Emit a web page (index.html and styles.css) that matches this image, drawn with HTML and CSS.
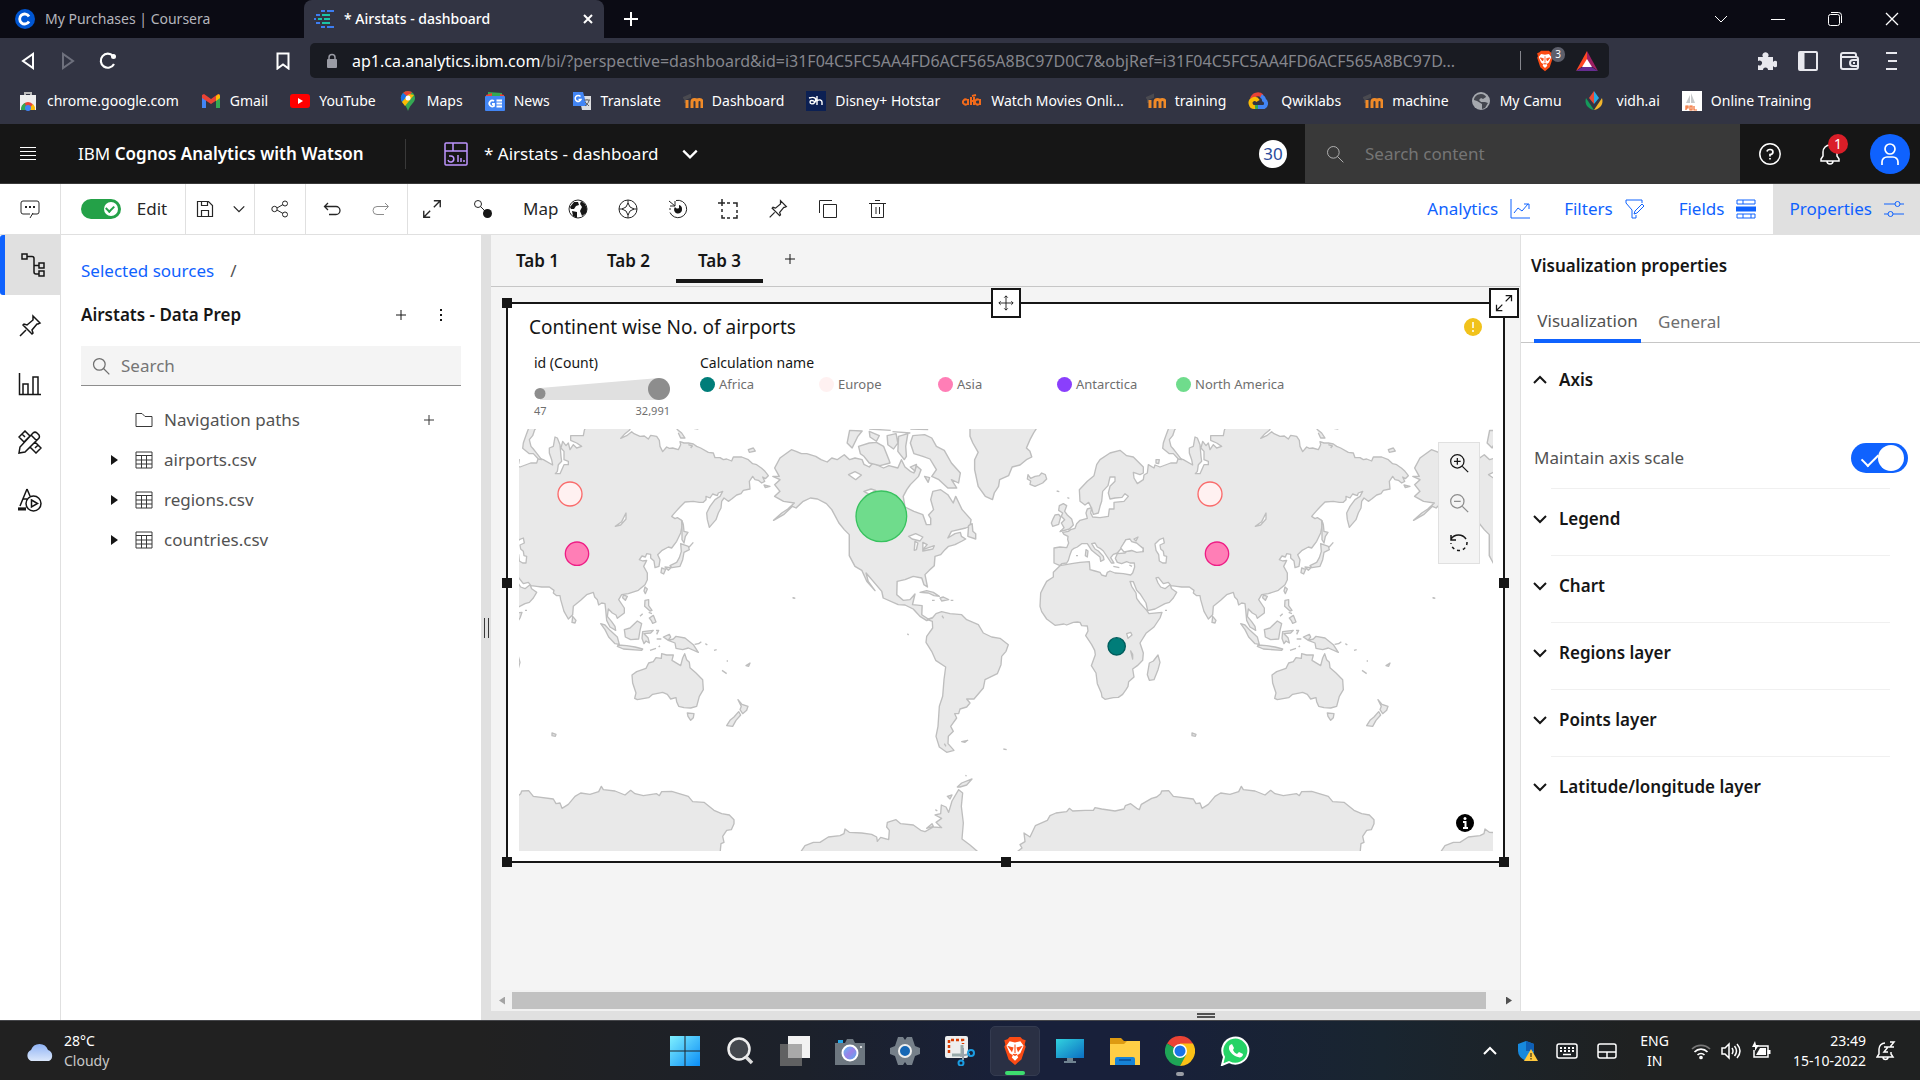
FILE: index.html
```html
<!DOCTYPE html>
<html lang="en">
<head>
<meta charset="utf-8">
<title>* Airstats - dashboard</title>
<link rel="stylesheet" href="styles.css">
</head>
<body>
<svg class="defs" aria-hidden="true">
  <symbol id="plus" viewBox="0 0 16 16"><path d="M8 3v10M3 8h10"/></symbol>
  <symbol id="search" viewBox="0 0 24 24"><circle cx="10" cy="10" r="7"/><path d="M15 15l7 7"/></symbol>
  <symbol id="down" viewBox="0 0 16 16"><path d="M2 5l6 6 6-6"/></symbol>
  <symbol id="up" viewBox="0 0 16 16"><path d="M2 11l6-6 6 6"/></symbol>
  <symbol id="expand" viewBox="0 0 24 24"><path d="M14 3h7v7M21 3l-7 7M10 21H3v-7M3 21l7-7"/></symbol>
  <symbol id="pin" viewBox="0 0 24 24"><path d="M15 2l7 7-2 1-1 0-5 6 1 3-1 1-9-9 1-1 3 1 6-5 0-2zM8 16l-6 6"/></symbol>
  <symbol id="table" viewBox="0 0 18 18"><path d="M1 1h16v16H1zM1 4.500h16M1 9h16M1 13h16M6.500 4.500V17M11.500 4.500V17"/></symbol>
  <symbol id="moodle" viewBox="0 0 20 20"><path d="M0 7l7-3v2L2 8v4" fill="none" stroke="#4a4a50" stroke-width="2"/><path d="M4 9v8M9 17V11a2.500 2.500 0 0 1 5 0v6M14 11a2.500 2.500 0 0 1 5 0v6" fill="none" stroke="#f08a28" stroke-width="3"/></symbol>
  <symbol id="lion" viewBox="0 0 24 28"><path d="M7 1h10l2 2 3 1-1 4 1 2-4 12-6 5-6-5L2 10l1-2-1-4 3-1z" fill="#fb4b14"/><path d="M7 5l5 1 5-1 3 4-3 7-3 2 1 2-3 3-3-3 1-2-3-2-3-7z" fill="#fff"/><path d="M6 10l4 1-1 3zM18 10l-4 1 1 3zM12 8v8M10 17l2 1 2-1" fill="#fb4b14" stroke="#fb4b14"/></symbol>
</svg>

<div class="screen">
  <header class="browser">
    <div class="tabstrip">
      <div class="btab"><svg class="i20" viewBox="0 0 20 20"><circle cx="10" cy="10" r="10" fill="#0056d2"/><path d="M14 7.500a5 5 0 1 0 0 5" fill="none" stroke="#fff" stroke-width="2.800"/></svg><span>My Purchases | Coursera</span></div>
      <div class="btab active"><svg class="i20" viewBox="0 0 20 20" fill="none" stroke-width="2"><path d="M7 2h4M13 2h7M2 6h4M0 10h2M2 14h4M7 18h4M13 18h7" stroke="#3d7df2"/><path d="M8 6h8M4 10h4M10 10h6M8 14h8" stroke="#1ac2a8"/></svg><span>* Airstats - dashboard</span><button class="plain close" aria-label="Close tab"><svg class="i12" viewBox="0 0 12 12"><path d="M2 2l8 8M10 2l-8 8" stroke-width="2"/></svg></button></div>
      <button class="plain newtab" aria-label="New tab"><svg class="i16" viewBox="0 0 16 16"><path d="M8 1v14M1 8h14" stroke-width="2"/></svg></button>
      <div class="wincontrols">
        <button class="plain" aria-label="Search tabs"><svg class="i14" viewBox="0 0 14 14"><path d="M1 4l6 6 6-6"/></svg></button>
        <button class="plain" aria-label="Minimize"><svg class="i14" viewBox="0 0 14 14"><path d="M0 7.500h14"/></svg></button>
        <button class="plain" aria-label="Restore"><svg class="i14" viewBox="0 0 14 14"><rect x=".5" y="2.500" width="11" height="11" rx="2"/><path d="M3 .5h7.500a3 3 0 0 1 3 3V11"/></svg></button>
        <button class="plain" aria-label="Close"><svg class="i14" viewBox="0 0 14 14"><path d="M1 1l12 12M13 1L1 13" stroke-width="1.300"/></svg></button>
      </div>
    </div>
    <div class="navbar">
      <button class="plain back" aria-label="Back"><svg class="i18" viewBox="0 0 18 18"><path d="M14 2v14L4 9z" stroke-width="2"/></svg></button>
      <button class="plain forward" aria-label="Forward"><svg class="i18" viewBox="0 0 18 18"><path d="M4 2v14l10-7z" stroke-width="2"/></svg></button>
      <button class="plain reload" aria-label="Reload"><svg class="i18" viewBox="0 0 18 18"><path d="M15 12a7 7 0 1 1-1-8" stroke-width="2.200"/><circle cx="14.500" cy="4.500" r="2.500" fill="#fff" stroke="none"/></svg></button>
      <button class="plain mark" aria-label="Bookmark"><svg class="i18" viewBox="0 0 18 18"><path d="M3.500 1.500h11v15l-5.500-4-5.500 4z" stroke-width="2"/></svg></button>
      <div class="url">
        <svg class="i16" viewBox="0 0 16 16"><path d="M5 7V4.500a3 3 0 0 1 6 0V7" stroke="#9a9ca5" stroke-width="1.500"/><rect x="3" y="6" width="10" height="9" rx="1" fill="#9a9ca5"/></svg>
        <span class="address"><b>ap1.ca.analytics.ibm.com</b>/bi/?perspective=dashboard&amp;id=i31F04C5FC5AA4FD6ACF565A8BC97D0C7&amp;objRef=i31F04C5FC5AA4FD6ACF565A8BC97D...</span>
        <span class="rule"></span>
        <button class="plain shield" aria-label="Shields"><svg class="lionicon"><use href="#lion"/></svg><span class="count">3</span></button>
        <svg class="i22" viewBox="0 0 22 22"><path d="M11 1L0 21l11-8z" fill="#ff4724"/><path d="M11 1l11 20-11-8z" fill="#9e1f63"/><path d="M0 21h22l-11-7z" fill="#662d91"/><path d="M11 9l5 8H6z" fill="#fff"/></svg>
      </div>
      <div class="exts">
        <svg class="i20" viewBox="0 0 20 20"><path d="M1 6h5a3 3 0 1 1 5 0h5v5a3 3 0 1 1 0 4v4h-5a2.500 2.500 0 1 0-5 0H1v-5a2.500 2.500 0 1 0 0-4z" fill="#e8e8ee"/></svg>
        <svg class="i20" viewBox="0 0 20 20"><rect x="1" y="1" width="18" height="18" rx="1" stroke-width="2"/><path d="M4 1v18" stroke-width="5"/></svg>
        <svg class="i20" viewBox="0 0 20 20" stroke-width="2"><path d="M16 7V4a2 2 0 0 0-2-2H3a2 2 0 0 0-2 2v12a2 2 0 0 0 2 2h13a2 2 0 0 0 2-2V8a2 2 0 0 0-2-2H1"/><path d="M19 9h-6a3 3 0 0 0 0 6h6M13 12h2"/></svg>
        <svg class="i20" viewBox="0 0 20 20"><path d="M5 2h11M7 10h9M5 18h11" stroke-width="2"/></svg>
      </div>
    </div>
    <nav class="bookmarks" aria-label="Bookmarks">
      <a href="#"><svg class="i20" viewBox="0 0 20 20"><path d="M2 4h16v15H2z" fill="#eee"/><path d="M7 4V2h6v2" fill="none" stroke="#bbb" stroke-width="2"/><path d="M4 17a6 6 0 0 1 12 0H4z" fill="#ea4335"/><path d="M3 19a7 7 0 0 1 4-7l2 7z" fill="#34a853"/><path d="M17 19a7 7 0 0 0-2-6l-5 6z" fill="#fbbc05"/><circle cx="10" cy="17" r="3" fill="#4285f4"/></svg>chrome.google.com</a>
      <a href="#"><svg class="i20" viewBox="0 0 20 20"><path d="M1 5v12h4V8z" fill="#4285f4"/><path d="M19 5v12h-4V8z" fill="#34a853"/><path d="M1 4l2-1 7 5 7-5 2 1v3l-9 6-9-6z" fill="#ea4335"/><path d="M15 5l3-2 1 2v2l-4 3z" fill="#fbbc05"/></svg>Gmail</a>
      <a href="#"><svg class="i20" viewBox="0 0 20 20"><rect y="3" width="20" height="14" rx="3" fill="#f00"/><path d="M8 7l5 3-5 3z" fill="#fff"/></svg>YouTube</a>
      <a href="#"><svg class="i20" viewBox="0 0 20 20"><path d="M10 0a7 7 0 0 0-7 7c0 5 5 6 7 13 2-7 7-8 7-13a7 7 0 0 0-7-7z" fill="#34a853"/><path d="M10 0a7 7 0 0 0-5 2l5 5 4-6z" fill="#ea4335"/><path d="M5 2a7 7 0 0 0-1 9l6-5z" fill="#1a73e8"/><path d="M4 11l7-8 5 1-9 11z" fill="#fbbc04"/><circle cx="10" cy="7" r="2.500" fill="#fff"/></svg>Maps</a>
      <a href="#"><svg class="i20" viewBox="0 0 20 20"><path d="M3 1l14 1v5H3z" fill="#34a853"/><path d="M1 4l6-2v5H1zM15 3l4 1v3h-4z" fill="#ea4335"/><rect y="5" width="20" height="15" rx="1" fill="#4285f4"/><path d="M9 10a3 3 0 1 0 0 5v-2H7M11.500 9.500H17M11.500 12.500H17M11.500 15.500H17" fill="none" stroke="#fff" stroke-width="1.800"/></svg>News</a>
      <a href="#"><svg class="i20" viewBox="0 0 20 20"><path d="M7 5h12v14H10z" fill="#dcdde0"/><path d="M1 1h10l4 14H1z" fill="#4285f4"/><path d="M8.500 5.500a3 3 0 1 0 .5 3H6.500" fill="none" stroke="#fff" stroke-width="1.500"/><path d="M12 9h6M15 8v1M17 9c0 3-3 5-4 6M13 11l4 4" fill="none" stroke="#666"/></svg>Translate</a>
      <a href="#"><svg class="i20"><use href="#moodle"/></svg>Dashboard</a>
      <a href="#"><svg class="i20" viewBox="0 0 20 20"><rect width="20" height="20" fill="#0c2053"/><path d="M3 7c6-2 8 1 6 4-2 3-5 2-5 0s3-2 5 0M11 5v9M11 10c2-2 5-1 5 1v3" fill="none" stroke="#fff" stroke-width="1.400"/></svg>Disney+ Hotstar</a>
      <a href="#"><svg class="i20" viewBox="0 0 20 20"><path d="M5 9a2.500 2.500 0 1 0 0 4M6 8v6M9 6v8M9 10h3M12 6v8M17 9a2.500 2.500 0 1 0 0 4M18 8v6M10 5l4-1" fill="none" stroke="#f26a1b" stroke-width="2"/></svg>Watch Movies Onli...</a>
      <a href="#"><svg class="i20"><use href="#moodle"/></svg>training</a>
      <a href="#" class="wide"><svg class="i20" viewBox="0 0 20 20" fill="none" stroke-width="4"><path d="M4 8a6 6 0 0 1 10-3" stroke="#ea4335"/><path d="M13 5c2 1 3 3 3 4a4 4 0 0 1 0 7h-6" stroke="#4285f4"/><path d="M10 16H6" stroke="#34a853"/><path d="M7 16a4 4 0 1 1 3-6" stroke="#fbbc05"/></svg>Qwiklabs</a>
      <a href="#"><svg class="i20"><use href="#moodle"/></svg>machine</a>
      <a href="#"><svg class="i20" viewBox="0 0 20 20"><circle cx="10" cy="10" r="9" fill="#a5a8ae"/><path d="M10 3c3 0 5 2 5 3l-3 2-2-1-2 2 2 2h4l3 1-3 5-3 1 0-5-5-3-3-1c0-3 3-6 7-6z" fill="#44464f"/></svg>My Camu</a>
      <a href="#" class="wide"><svg class="i20" viewBox="0 0 20 20"><path d="M10 0l5 7-5 6z" fill="#29a9e1"/><path d="M10 0L5 7l5 6z" fill="#e94a35"/><path d="M2 7l8 12C4 18 0 13 2 7z" fill="#159a5b"/><path d="M18 7l-8 12c6-1 10-6 8-12z" fill="#f2b52c"/></svg>vidh.ai</a>
      <a href="#"><svg class="i20" viewBox="0 0 20 20"><rect width="20" height="20" fill="#fff"/><path d="M4 12l4-8v8zM9 12V2l4 10z" fill="#c6c8ca"/><path d="M4 19v-4h2v2H4M8 19v-4h2v4zM12 15v4h3" fill="none" stroke="#f16a2b" stroke-width="1.200"/></svg>Online Training</a>
    </nav>
  </header>

  <header class="appbar">
    <button class="plain menu" aria-label="Menu"><svg class="i16" viewBox="0 0 16 16"><path d="M0 1.500h16M0 5.500h16M0 9.500h16M0 13.500h16" stroke-width="1.200"/></svg></button>
    <div class="brand">IBM <b>Cognos Analytics with Watson</b></div>
    <button class="plain switcher"><svg class="i24 purple" viewBox="0 0 24 24" stroke-width="1.500"><rect x="1" y="1" width="22" height="22" rx="1"/><path d="M1 9h22M9 1v8M5 14h2a3 3 0 1 1-3 4M14 13v7M17 16v4M20 18v2"/></svg><span>* Airstats - dashboard</span><svg class="i18 chev"><use href="#down"/></svg></button>
    <span class="trial">30</span>
    <label class="sitesearch"><svg class="i20"><use href="#search"/></svg><input type="text" placeholder="Search content" aria-label="Search content"></label>
    <div class="account">
      <button class="plain" aria-label="Help"><svg class="i22" viewBox="0 0 22 22"><circle cx="11" cy="11" r="10.200" stroke-width="1.500"/><path d="M8 8.500a3 2.500 0 1 1 3 3v2M11 15v1.500" stroke-width="1.700"/></svg></button>
      <button class="plain bell" aria-label="Notifications"><svg class="i24" viewBox="0 0 24 24"><path d="M3 19h18v-2l-2-3v-4a7 7 0 0 0-14 0v4l-2 3zM9 19a3 3 0 0 0 6 0M12 3V1" stroke-width="1.500"/></svg><span>1</span></button>
      <button class="plain avatar" aria-label="Account"><svg class="i24" viewBox="0 0 24 24"><circle cx="12" cy="7" r="5" stroke-width="1.700"/><path d="M4 23v-3a5 5 0 0 1 5-5h6a5 5 0 0 1 5 5v3" stroke-width="1.700"/></svg></button>
    </div>
  </header>

  <div class="toolbar">
    <div class="grp rail-w"><button class="plain" aria-label="Comments"><svg class="i20" viewBox="0 0 20 20"><path d="M12 15h5a2 2 0 0 0 2-2V4a2 2 0 0 0-2-2H3a2 2 0 0 0-2 2v9a2 2 0 0 0 2 2h7M13 14l-3 5"/><path d="M5 8h2M9 8h2M13 8h2" stroke-width="2"/></svg></button></div>
    <div class="grp edit"><input type="checkbox" id="edit" class="switch green" checked><label for="edit">Edit</label></div>
    <div class="grp save"><button class="plain" aria-label="Save"><svg class="i18" viewBox="0 0 18 18"><path d="M1.500 1.500h11l4 4v11h-15zM5.500 1.500v4h6v-4M5.500 16.500v-6h7v6" stroke-width="1.200"/></svg></button><button class="plain" aria-label="Save options"><svg class="i14 strong"><use href="#down"/></svg></button></div>
    <div class="grp share"><button class="plain" aria-label="Share"><svg class="i18" viewBox="0 0 18 18"><circle cx="3.500" cy="9" r="2.700"/><circle cx="14" cy="3.500" r="2.500"/><circle cx="14" cy="14.500" r="2.500"/><path d="M6 8l6-3.500M6 10l6 3.500"/></svg></button></div>
    <div class="grp undo"><button class="plain" aria-label="Undo"><svg class="i18" viewBox="0 0 18 18"><path d="M5 3L1.500 6.500 5 10M2 6.500h11a4 4 0 0 1 0 8H6" stroke-width="1.300"/></svg></button><button class="plain off" aria-label="Redo"><svg class="i18" viewBox="0 0 18 18"><path d="M13 3l3.500 3.500L13 10M16 6.500H5a4 4 0 0 0 0 8h7"/></svg></button></div>
    <div class="tools">
      <button class="plain" aria-label="Expand"><svg class="i22 strong"><use href="#expand"/></svg></button>
      <button class="plain" aria-label="Link"><svg class="i20" viewBox="0 0 20 20"><circle cx="5" cy="5" r="3.500"/><path d="M7.500 7.500L12 12"/><circle cx="14.500" cy="14.500" r="4.500" fill="#161616"/></svg></button>
      <button class="plain maptype">Map<svg class="i20" viewBox="0 0 20 20"><circle cx="10" cy="10" r="9"/><path d="M6 3l4 0 1 3-3 1-2 3-3 0-1-2zM13 2l4 3 2 5-1 4-4 3-2-5 2-4-2-3zM4 12l5 1 0 6-4-2z" fill="#161616"/></svg></button>
      <button class="plain" aria-label="Navigate"><svg class="i20" viewBox="0 0 20 20"><circle cx="10" cy="10" r="9"/><path d="M10 4l2 4 4 2-4 2-2 4-2-4-4-2 4-2zM10 1v4M10 15v4M1 10h4M15 10h4"/></svg></button>
      <button class="plain" aria-label="Refresh view"><svg class="i20" viewBox="0 0 20 20"><path d="M8 1.500a8.700 8.700 0 1 1-6 12M1 2l6 5M7 2v5H2M2 9v2"/><path d="M14 10a4 4 0 1 1-7-2 3 3 0 0 0 4 1V6a4 4 0 0 1 3 4z" fill="#161616"/></svg></button>
      <button class="plain" aria-label="Select area"><svg class="i20 strong" viewBox="0 0 20 20"><path d="M4 0v7M0 4h7M9 4h3M15 4h4v4M19 11v3M19 16v3h-4M12 19H9M7 19H4v-3M4 13v-3"/></svg></button>
      <button class="plain" aria-label="Pin"><svg class="i20 strong"><use href="#pin"/></svg></button>
      <button class="plain" aria-label="Copy"><svg class="i20" viewBox="0 0 20 20"><path d="M1.500 14V1.500H14M5.500 5.500h13v13h-13z"/></svg></button>
      <button class="plain" aria-label="Delete"><svg class="i20" viewBox="0 0 20 20"><path d="M3.500 4.500v14h12v-14M1 4.500h17M7 1.500h5M8 8v7M11.500 8v7"/></svg></button>
    </div>
    <div class="panels">
      <button class="plain">Analytics<svg class="i20" viewBox="0 0 20 20"><path d="M1 0v19h19M4 14l4-5 4 3 6-7M14 5h5v5"/></svg></button>
      <button class="plain">Filters<svg class="i20" viewBox="0 0 20 20"><path d="M17 4V1H1v3l6 7v8h4v-3M10 12l7-7 2 2-7 7-3 1z"/></svg></button>
      <button class="plain">Fields<svg class="i20" viewBox="0 0 20 20"><path d="M1 1h18v4H1zM7 1v4M1 15h18v4H1zM7 15v4M15 15v4"/><rect y="7.500" width="20" height="5" fill="#0f62fe" stroke="none"/></svg></button>
      <button class="plain on">Properties<svg class="i20" viewBox="0 0 20 20"><path d="M0 5h11M16 5h4M0 15h4M9 15h11"/><circle cx="13.500" cy="5" r="2.500"/><circle cx="6.500" cy="15" r="2.500"/></svg></button>
    </div>
  </div>

  <main class="work">
    <nav class="rail" aria-label="Panels">
      <button class="plain on" aria-label="Sources"><svg class="i24" viewBox="0 0 24 24"><path d="M1 1h5v5H1zM18 10h5v5h-5zM18 18h5v5h-5zM6 3.500h5a2 2 0 0 1 2 2V19a2 2 0 0 0 2 2h3M13 12.500h5"/></svg></button>
      <button class="plain" aria-label="Pinned"><svg class="i24"><use href="#pin"/></svg></button>
      <button class="plain" aria-label="Visualizations"><svg class="i24" viewBox="0 0 24 24"><path d="M1.500 1v21.500H23M5 22V12h5v10M15 22V5h5v17"/></svg></button>
      <button class="plain" aria-label="Widgets"><svg class="i24" viewBox="0 0 24 24"><path d="M15 3a3 3 0 0 1 4 0l2 2a3 3 0 0 1 0 3L7 22l-6 1 1-6zM13 5l6 6M7 1l5 5-6 6-5-5zM4 4l3 3M17 12l6 6-5 5-6-6M20 15l-3 3"/></svg></button>
      <button class="plain" aria-label="Animations"><svg class="i24" viewBox="0 0 24 24"><path d="M9 1L2 18M9 1l3 7M5 11h4M0 20.500h8" /><path d="M0 21h8" stroke-width="3"/><circle cx="15.500" cy="15.500" r="7.500"/><path d="M13.500 12l6 3.500-6 3.500z"/></svg></button>
    </nav>
    <aside class="sources">
      <div class="crumb"><a href="#">Selected sources</a><span>/</span></div>
      <div class="srchead"><h2>Airstats - Data Prep</h2><button class="plain" aria-label="Add source"><svg class="i16"><use href="#plus"/></svg></button><button class="plain" aria-label="More"><svg class="i16" viewBox="0 0 16 16"><path d="M7 2h2v2H7zM7 7h2v2H7zM7 12h2v2H7z" fill="#161616"/></svg></button></div>
      <label class="srcsearch"><svg class="i20 strong"><use href="#search"/></svg><input type="text" placeholder="Search" aria-label="Search sources"></label>
      <ul class="tree">
        <li class="nav"><svg class="i18" viewBox="0 0 18 18"><path d="M1 2.500h6l3 3h7v10H1z"/></svg><span>Navigation paths</span><button class="plain" aria-label="Add path"><svg class="i16"><use href="#plus"/></svg></button></li>
        <li><i class="tri"></i><svg class="i18"><use href="#table"/></svg><span>airports.csv</span></li>
        <li><i class="tri"></i><svg class="i18"><use href="#table"/></svg><span>regions.csv</span></li>
        <li><i class="tri"></i><svg class="i18"><use href="#table"/></svg><span>countries.csv</span></li>
      </ul>
    </aside>
    <div class="splitter"><i></i></div>
    <div class="stage">
      <div class="upper">
        <section class="canvas">
          <div class="tabs"><button class="plain">Tab 1</button><button class="plain">Tab 2</button><button class="plain on">Tab 3</button><button class="plain add" aria-label="Add tab"><svg class="i16"><use href="#plus"/></svg></button></div>
          <article class="widget">
            <i class="h tl"></i><i class="h ml"></i><i class="h bl"></i><i class="h bc"></i><i class="h br"></i><i class="h mr"></i>
            <button class="grab move" aria-label="Move"><svg class="i16" viewBox="0 0 18 18"><path d="M9 1v16M1 9h16M7 3l2-2 2 2M7 15l2 2 2-2M3 7L1 9l2 2M15 7l2 2-2 2"/></svg></button>
            <button class="grab full" aria-label="Expand widget"><svg class="i20 strong"><use href="#expand"/></svg></button>
            <div class="whead"><h3>Continent wise No. of airports</h3><svg class="i18" viewBox="0 0 18 18"><circle cx="9" cy="9" r="9" fill="#f1c21b"/><path d="M9 4v6M9 12v2" stroke="#fff" stroke-width="1.500"/></svg></div>
            <div class="legends">
              <div class="sizes"><span>id (Count)</span>
                <svg class="ramp" viewBox="0 0 136 23"><path d="M6 10L125 0v22H6z" fill="#e0e0e0"/><circle cx="6" cy="15.500" r="5.500" fill="#8d8d8d"/><circle cx="125" cy="11" r="11" fill="#8d8d8d"/></svg>
                <div class="ends"><span>47</span><span>32,991</span></div></div>
              <div class="names"><span>Calculation name</span>
                <ul><li><i class="africa"></i>Africa</li><li><i class="europe"></i>Europe</li><li><i class="asia"></i>Asia</li><li><i class="antarctica"></i>Antarctica</li><li><i class="namerica"></i>North America</li></ul></div>
            </div>
            <div class="map">
              <svg viewBox="-1443 598 2922 1266" preserveAspectRatio="xMidYMid slice">
                <defs>
                <g id="world">
                  <path d="M678 590L815 590 808 602 795 612 782 626 800 618 815 606 822 612 840 620 853 619 865 628 872 617 890 620 898 632 900 650 908 666 920 652 928 656 938 655 955 660 962 645 960 636 972 640 985 640 1000 643 1010 650 1022 655 1045 668 1060 670 1065 684 1080 684 1090 690 1100 688 1115 694 1120 682 1145 682 1165 690 1178 702 1190 705 1205 716 1215 725 1225 738 1216 747 1208 742 1214 755 1205 760 1195 752 1185 750 1178 740 1168 755 1170 778 1150 782 1143 792 1130 796 1115 808 1105 815 1092 805 1085 815 1083 835 1075 850 1068 870 1055 885 1048 893 1042 870 1040 850 1050 830 1065 810 1080 800 1088 785 1075 790 1072 798 1058 793 1050 805 1038 800 1038 810 1030 818 1018 818 1000 815 975 817 960 832 948 845 935 860 945 867 952 864 965 872 968 880 962 910 950 935 935 955 925 952 905 963 893 975 900 990 897 1010 885 1014 882 994 872 985 872 974 860 972 856 982 846 979 838 990 848 994 860 992 851 1010 862 1030 862 1050 855 1065 835 1082 805 1092 785 1095 776 1110 793 1135 793 1150 772 1166 768 1156 757 1150 745 1138 742 1160 755 1176 765 1190 767 1202 750 1192 740 1172 737 1140 735 1122 725 1120 716 1126 712 1110 704 1102 700 1088 680 1095 662 1112 640 1130 638 1155 625 1168 612 1145 602 1110 600 1098 590 1098 580 1090 582 1082 568 1072 545 1072 530 1070 513 1068 505 1058 490 1062 475 1043 468 1045 474 1060 482 1072 495 1077 510 1065 515 1077 530 1088 520 1105 508 1118 495 1122 465 1138 443 1143 438 1120 420 1092 410 1082 400 1056 390 1055 395 1070 408 1090 410 1106 420 1120 440 1142 447 1152 486 1148 480 1165 462 1192 438 1211 420 1240 424 1252 430 1270 428 1292 412 1308 398 1318 402 1342 386 1356 384 1370 378 1380 368 1394 355 1403 340 1404 315 1409 306 1402 304 1390 292 1362 288 1330 274 1308 280 1292 286 1275 284 1262 275 1245 257 1218 264 1204 262 1189 245 1188 240 1178 232 1177 220 1178 200 1186 192 1183 165 1187 140 1168 125 1146 120 1130 122 1090 130 1074 140 1055 160 1042 160 1028 180 1008 215 1002 240 998 268 996 270 1020 285 1024 300 1028 305 1036 318 1040 322 1028 330 1024 345 1030 370 1032 392 1036 398 1030 404 1012 403 1000 390 1000 380 996 365 1002 352 998 346 986 352 972 375 970 378 966 400 962 430 966 430 955 415 948 402 940 385 932 378 930 370 945 362 958 352 970 340 974 332 984 342 1000 334 1000 322 982 310 964 300 956 292 952 285 940 275 942 285 958 295 964 310 980 312 990 302 995 300 982 285 970 275 962 262 942 245 942 232 952 222 956 215 962 210 975 205 992 200 1000 185 1002 180 1008 162 1000 162 955 180 952 200 954 206 940 203 930 204 920 192 914 188 908 205 905 212 900 225 896 230 882 240 872 262 866 258 850 262 838 275 834 272 850 278 862 300 864 325 860 328 838 342 838 342 818 372 815 385 800 375 792 366 803 345 805 330 808 325 790 330 770 345 755 345 742 330 742 324 768 308 785 305 815 300 830 295 850 280 854 275 836 266 818 255 826 240 815 238 780 262 755 282 738 290 705 300 690 330 670 360 662 380 678 400 682 430 712 430 730 420 735 400 728 402 745 412 762 430 750 432 736 442 730 445 705 462 715 465 706 480 712 512 700 530 700 535 685 550 690 578 706 575 690 568 670 568 655 580 650 585 622 592 625 600 645 603 680 605 695 595 705 592 725 586 732 600 732 612 705 625 705 625 695 612 690 612 665 603 655 608 635 618 648 625 640 630 660 640 645 650 655 665 650 650 640 632 632 632 618 670 618 673 602z"/>
                  <path class="sea" d="M362 955L378 930 390 928 395 936 410 940 430 957 428 966 410 968 395 962 372 967zM402 928L414 922 408 934zM465 943L478 930 490 925 493 940 480 946 482 958 490 965 492 978 500 980 498 1000 488 1000 478 994 476 975 468 962zM380 1212L392 1208 396 1216 384 1226zM392 1264L398 1274 398 1288zM798 850L798 868 782 886 766 890 785 876z"/>
                  <path d="M508 590L534 590 524 600 518 618 508 630 513 650 520 658 528 668 545 690 535 688 520 672 508 672 488 656 490 640 497 620zM178 828L190 822 200 828 194 845 202 856 215 868 220 886 208 898 180 906 192 894 184 880 194 870 184 860 188 850 176 842zM165 856L176 854 182 862 176 884 158 890 154 880 160 866zM84 735L92 746 105 740 118 738 125 730 136 735 140 748 128 760 105 770 90 764 92 754 82 748zM468 690l10 0-2 12-8-2zM170 784l8 2M202 804l6 2M1165 660L1180 655 1186 664 1168 668zM1212 766l18 4-14 4zM950 598L965 610 975 625 962 625 955 610M985 645l12 4-5 6M1000 596l15 2M965 872L970 885 972 905 984 908 976 920 972 940 966 930 966 900zM962 942L985 950 988 960 972 968 968 990 960 1010 936 1014 930 1008 950 998 958 984 964 965zM905 1015l12 4-6 14-8-4zM915 1012l18 2-8 8zM985 955L1000 938M855 1072L862 1078 856 1092 852 1084zM790 1096l12 4-6 12-8-8zM855 1112L866 1110 866 1128 876 1142 870 1144 854 1130zM868 1165l12-8 8 20-10 4-4-8zM866 1148l10 4M840 1160l8-8M638 1160L648 1172 645 1180 636 1178zM722 1182L735 1186 750 1202 772 1222 778 1244 765 1242 746 1222 735 1200zM775 1246L800 1248 825 1252 848 1258 845 1262 790 1258 772 1250zM793 1200L810 1195 832 1174 845 1182 840 1202 836 1228 812 1230 796 1222zM848 1206L880 1202 872 1210 852 1212 864 1224 868 1240 858 1234 852 1242 846 1226zM888 1202l8 0-6 12M890 1228l14 0M870 1262l18-6M910 1222L928 1214 932 1222 924 1232 940 1228 948 1220 975 1225 1000 1245 1015 1268 985 1255 968 1260 948 1256 945 1240 925 1232zM1004 1244l12-2 8-6M1036 1242l6 4M1062 1262l8-2M896 1252l4-4M1100 1294l4 0M1158 1308l12-8-4 10zM1086 1322l14 10M1298 1104l8 2M495 1142l6 0M228 978l6 0M258 960l6 4-2 18-6-4zM340 1010l18 4M388 1006l8 4M474 1276L480 1298 474 1320 462 1350 448 1352 442 1335 448 1300 460 1294z"/>
                  <path d="M905 1272L920 1276 940 1276 936 1292 962 1308 968 1285 974 1272 980 1290 988 1298 990 1314 1008 1330 1028 1350 1030 1380 1018 1400 1010 1430 992 1435 972 1434 956 1430 950 1416 948 1404 932 1408 922 1394 908 1388 878 1394 866 1404 832 1410 824 1406 828 1390 818 1360 816 1336 830 1326 858 1316 866 1300 880 1296 888 1284 904 1286zM982 1450L1002 1452 1000 1464 992 1472 984 1460zM1134 1410L1146 1424 1164 1430 1160 1442 1148 1452 1140 1440 1144 1430zM1136 1446L1142 1456 1128 1472 1118 1490 1100 1488 1110 1472 1122 1462zM576 1510l12 4-2 6-10-2z"/>
                  <path d="M44 1872L66 1855 60 1845 75 1836 72 1810 90 1822 106 1788 142 1772 150 1758 168 1750 200 1746 208 1736 218 1744 255 1742 280 1742 285 1734 305 1738 345 1744 372 1738 376 1728 392 1722 410 1736 418 1740 424 1724 455 1706 470 1702 482 1692 485 1684 506 1683 520 1700 580 1708 588 1722 600 1720 606 1736 625 1724 645 1700 662 1690 690 1694 716 1686 724 1670 730 1680 765 1684 795 1696 812 1682 825 1692 850 1698 890 1692 898 1698 905 1686 935 1685 985 1700 998 1716 1032 1718 1062 1742 1085 1752 1108 1756 1122 1770 1122 1782 1114 1800 1100 1802 1088 1820 1092 1838 1083 1842 1080 1872z"/>
                  <g transform="translate(-1560) scale(1.0714 1)">
                    <path d="M820 740L838 740 825 715 840 685 872 660 885 665 900 672 915 672 940 680 955 690 972 697 985 685 1000 690 1020 675 1035 690 1050 685 1070 690 1075 704 1090 712 1100 700 1130 715 1145 708 1170 715 1180 690 1190 712 1205 725 1215 730 1222 708 1235 720 1228 740 1205 765 1195 780 1185 800 1190 832 1215 845 1240 855 1250 885 1262 885 1262 866 1256 856 1270 840 1262 810 1268 785 1290 780 1310 795 1325 820 1332 800 1350 840 1375 870 1372 890 1360 895 1320 905 1310 925 1330 912 1345 908 1348 920 1360 928 1350 934 1330 945 1312 950 1302 960 1290 975 1274 980 1272 1008 1258 1022 1246 1035 1253 1072 1243 1065 1237 1045 1213 1040 1190 1050 1168 1055 1167 1095 1185 1112 1204 1110 1218 1093 1211 1125 1238 1128 1237 1155 1255 1168 1266 1165 1251 1173 1232 1160 1213 1138 1190 1126 1171 1125 1129 1105 1125 1085 1097 1050 1081 1030 1087 1055 1106 1083 1083 1055 1069 1022 1050 1010 1034 978 1034 915 1020 900 1005 880 985 840 970 822 945 808 925 805 905 815 885 835 875 830 850 855 822 872 845 850 862 838 880 820 850 815 825 800 840 785 825 765 840 750z"/>
                    <path class="sea" d="M1032 735L1050 726 1068 736 1052 750zM1075 785L1095 778 1108 782 1090 794zM1200 920L1220 912 1240 922 1232 934 1210 928zM1218 935L1226 940 1222 960 1216 962zM1240 938L1252 945 1240 960 1272 948 1268 958 1240 964z"/>
                    <path d="M1035 602L1070 604 1058 620 1042 655 1028 640zM1060 650L1090 640 1110 638 1130 650 1145 690 1148 700 1120 708 1090 700 1075 680 1065 672zM1090 605L1118 618 1110 635 1092 622zM1140 618L1165 612 1170 640 1158 658 1142 645zM1172 620L1198 612 1192 650 1194 680 1188 690 1170 665zM1205 640L1212 618 1245 615 1265 625 1278 650 1300 662 1320 700 1345 730 1340 760 1320 750 1335 775 1310 775 1285 750 1265 740 1278 720 1260 688 1240 680 1215 672zM1205 712L1222 704 1218 724zM1245 740l14 4-4 14zM1372 590L1372 620 1380 640 1395 668 1385 690 1385 720 1395 770 1415 800 1435 810 1440 790 1452 770 1455 750 1480 738 1490 712 1512 706 1530 690 1545 682 1540 665 1530 655 1540 630 1550 610 1562 590zM1090 598l60 4M1155 606l50 4M1205 598l50 2M1368 888L1378 882 1380 905 1388 912 1388 928 1366 920z"/>
                  </g>
                  <g transform="translate(-1500 930)">
                    <path d="M1283 240L1297 235 1308 222 1325 216 1350 222 1385 225 1400 240 1435 255 1450 280 1475 292 1500 296 1525 315 1518 335 1505 350 1503 375 1492 402 1455 420 1450 445 1422 478 1400 478 1410 490 1400 502 1380 508 1376 522 1364 522 1370 535 1352 560 1360 575 1345 590 1344 612 1362 632 1340 638 1318 622 1308 590 1314 560 1318 500 1328 470 1332 420 1337 382 1307 362 1295 335 1278 308 1280 290 1298 265 1297 245zM1260 158L1280 153 1300 158 1318 170 1302 168 1285 160zM1320 175L1330 172 1346 180 1325 184zM1352 182l8 0M1296 182l8 0M1385 606l18-4-8 6zM1510 628l10 2M1222 282l4 4M878 174l6 2M1326 228l5 8M1333 612l5 8"/>
                    <path d="M900 940L915 918 940 908 960 908 985 892 1020 888 1032 882 1035 868 1048 878 1085 880 1115 884 1130 892 1132 905 1142 893 1166 900 1168 872 1160 862 1162 848 1188 840 1202 852 1240 856 1262 872 1275 876 1300 862 1325 864 1308 848 1325 836 1305 826 1322 822 1324 796 1338 802 1346 818 1356 784 1376 750 1388 760 1384 800 1390 850 1386 898 1410 916 1438 940zM1372 742L1385 730 1405 722 1416 718 1400 736 1380 742zM1396 707l4 2M1342 770l14-4-6 12zM1306 810l6 4M1280 866l16-14 4 8z"/>
                  </g>
                </g>
                </defs>
                <g class="land"><use href="#world" x="-1920"/><use href="#world"/><use href="#world" x="1920"/></g>
                <g class="points">
                  <circle cx="-1290" cy="793" r="36" class="europe"/><circle cx="630" cy="793" r="36" class="europe"/>
                  <circle cx="-1269" cy="972" r="35" class="asia"/><circle cx="651" cy="972" r="35" class="asia"/>
                  <circle cx="-356" cy="860" r="76" class="namerica"/><circle cx="350" cy="1250" r="26" class="africa"/>
                </g>
              </svg>
              <div class="zoom">
                <button class="plain" aria-label="Zoom in"><svg class="i20" viewBox="0 0 24 24"><circle cx="10" cy="10" r="8"/><path d="M16 16l7 7M10 6v8M6 10h8"/></svg></button>
                <button class="plain off" aria-label="Zoom out"><svg class="i20" viewBox="0 0 24 24"><circle cx="10" cy="10" r="8"/><path d="M16 16l7 7M6 10h8"/></svg></button>
                <button class="plain" aria-label="Reset"><svg class="i20" viewBox="0 0 20 20"><path d="M2 6a9 9 0 0 1 15 0M2 2v5h5"/><path d="M18 9a8 8 0 1 1-16 1" stroke-dasharray="3 3"/></svg></button>
              </div>
              <button class="plain info" aria-label="Map information"><svg class="i18" viewBox="0 0 18 18"><circle cx="9" cy="9" r="9" fill="#000"/><path d="M7 8h2.500v6M7 14h5" stroke="#fff" stroke-width="2"/><circle cx="9" cy="4.500" r="1.500" fill="#fff"/></svg></button>
            </div>
          </article>
          <div class="hscroll"><i class="left"></i><span></span><i class="right"></i></div>
        </section>
        <aside class="props">
          <h2>Visualization properties</h2>
          <div class="ptabs"><button class="plain on">Visualization</button><button class="plain">General</button></div>
          <section class="axis"><button class="plain sec"><svg class="i16"><use href="#up"/></svg>Axis</button>
            <div class="scale"><label for="scale">Maintain axis scale</label><input type="checkbox" id="scale" class="switch blue" checked></div></section>
          <button class="plain sec"><svg class="i16"><use href="#down"/></svg>Legend</button>
          <button class="plain sec"><svg class="i16"><use href="#down"/></svg>Chart</button>
          <button class="plain sec"><svg class="i16"><use href="#down"/></svg>Regions layer</button>
          <button class="plain sec"><svg class="i16"><use href="#down"/></svg>Points layer</button>
          <button class="plain sec"><svg class="i16"><use href="#down"/></svg>Latitude/longitude layer</button>
        </aside>
      </div>
      <div class="drawer"><i></i></div>
    </div>
  </main>

  <footer class="taskbar">
    <div class="weather"><svg class="cloud" viewBox="0 0 30 20"><defs><linearGradient id="cl" x2="0" y2="1"><stop stop-color="#8fb3f5"/><stop offset="1" stop-color="#dbe7fb"/></linearGradient></defs><path d="M6 20a6 6 0 0 1 0-11 9 9 0 0 1 17 0 6 6 0 0 1 1 11z" fill="url(#cl)"/></svg><div><span>28°C</span><span class="dim">Cloudy</span></div></div>
    <div class="apps">
      <button class="plain" aria-label="Start"><svg class="i30" viewBox="0 0 30 30"><defs><linearGradient id="wn" x2="1" y2="1"><stop stop-color="#7ff0ff"/><stop offset="1" stop-color="#0a8cf5"/></linearGradient></defs><path d="M0 0h14.500v14.500H0zM15.500 0H30v14.500H15.500zM0 15.500h14.500V30H0zM15.500 15.500H30V30H15.500z" fill="url(#wn)"/></svg></button>
      <button class="plain" aria-label="Search"><svg class="i30" viewBox="0 0 30 30"><circle cx="14" cy="13" r="10.500" fill="#44484e" stroke="#eee" stroke-width="2.500"/><path d="M21 21l6 6" stroke="#ddd" stroke-width="3.500"/></svg></button>
      <button class="plain" aria-label="Task view"><svg class="i30" viewBox="0 0 30 30"><path d="M8 0h22v22H8z" fill="#f2f2f2"/><path d="M0 8h22v22H0z" fill="#686868" opacity=".9"/><path d="M8 8h14v14H8z" fill="#a9a9a9"/></svg></button>
      <button class="plain" aria-label="Camera"><svg class="i30" viewBox="0 0 30 30"><defs><linearGradient id="cm" x2="1" y2="1"><stop stop-color="#56c8f5"/><stop offset=".5" stop-color="#9a80e8"/><stop offset="1" stop-color="#4bb5f0"/></linearGradient></defs><path d="M3 4h5v4H3z" fill="#22a7e8"/><path d="M0 7h10l2-4h6l2 4h10v22H0z" fill="#6d7780"/><circle cx="15" cy="17" r="7.500" fill="url(#cm)" stroke="#fff" stroke-width="2"/><circle cx="26" cy="11" r="1" fill="#fff"/></svg></button>
      <button class="plain" aria-label="Settings"><svg class="i30" viewBox="0 0 30 30"><path d="M8 1h5l2 3 2-3h5l3 9 5 2v6l-5 2-3 9h-5l-2-3-2 3H8l-3-9-5-2v-6l5-2z" fill="#76808a"/><circle cx="15" cy="15" r="6" fill="#1667b5" stroke="#eee" stroke-width="2"/></svg></button>
      <button class="plain" aria-label="Snipping tool"><svg class="i30" viewBox="0 0 30 30"><rect width="23" height="22" rx="2" fill="#eee"/><path d="M4 17V4h14v4" fill="none" stroke="#d83b01" stroke-width="2.500" stroke-dasharray="3 2"/><path d="M7 19h10V9" fill="none" stroke="#9aa" stroke-width="3"/><path d="M18 12v12M15 20l10-2" stroke="#9aa3ab" stroke-width="2"/><circle cx="16" cy="27" r="2.500" fill="none" stroke="#1b9de2" stroke-width="2"/><circle cx="26" cy="17" r="3" fill="none" stroke="#1b9de2" stroke-width="2"/></svg></button>
      <button class="plain current" aria-label="Brave"><svg class="i30"><use href="#lion"/></svg></button>
      <button class="plain" aria-label="This PC"><svg class="i30" viewBox="0 0 30 30"><defs><linearGradient id="pc" x2="1" y2="1"><stop stop-color="#31d2df"/><stop offset="1" stop-color="#0c6fc2"/></linearGradient></defs><path d="M1 3h28v19H1z" fill="url(#pc)"/><path d="M12 22h6v3h3v2H9v-2h3z" fill="#708390"/></svg></button>
      <button class="plain" aria-label="File Explorer"><svg class="i30" viewBox="0 0 30 30"><path d="M0 2h11l3 3h15v22H0z" fill="#dd9a12"/><path d="M0 8h14l3-3h13v24H0z" fill="#ffce45"/><path d="M5 29v-6q0-2 2-2h16q2 0 2 2v6z" fill="#1683d8"/><path d="M9 24h12" stroke="#0b5aa5" stroke-width="2"/></svg></button>
      <button class="plain running" aria-label="Chrome"><svg class="i30" viewBox="0 0 30 30"><path d="M15 15L2 7.500A15 15 0 0 1 28 7.500z" fill="#ea4335"/><path d="M15 15L2 7.500A15 15 0 0 0 15 30l6.500-11z" fill="#1ea556"/><path d="M15 15l6 4-6 11A15 15 0 0 0 28 7.500H15z" fill="#fbc116"/><circle cx="15" cy="15" r="7" fill="#fff"/><circle cx="15" cy="15" r="5.500" fill="#1a73e8"/></svg></button>
      <button class="plain" aria-label="WhatsApp"><svg class="i30" viewBox="0 0 30 30"><path d="M2 29l2-8a13 13 0 1 1 5 5z" fill="#25d366" stroke="#fff" stroke-width="2"/><path d="M10 9l2-1 2 4-1 2c1 2 2 3 4 4l2-2 4 2c0 3-3 4-5 3-5-1-8-5-9-8 0-2 0-3 1-4z" fill="#fff"/></svg></button>
    </div>
    <div class="tray">
      <svg class="i16 chev"><use href="#up"/></svg>
      <svg class="i22" viewBox="0 0 22 22"><path d="M2 4l8-3 8 3v7q0 6-8 10-8-4-8-10z" fill="#1789dd"/><path d="M10 1l8 3v7h-8z" fill="#0f5fb5"/><path d="M15 9l7 12H8z" fill="#ffc83d"/><path d="M15 13v4M15 18v1.500" stroke="#111"/></svg>
      <svg class="i22" viewBox="0 0 22 22"><rect x="1" y="4" width="20" height="14" rx="2" stroke-width="1.500"/><path d="M4 8h14M4 11h14" stroke-width="2" stroke-dasharray="2 2"/><path d="M7 14.500h8" stroke-width="1.500"/></svg>
      <svg class="i22" viewBox="0 0 22 22"><rect x="2" y="4" width="18" height="14" rx="2" stroke-width="1.500"/><path d="M2 12h18M11 12v6" stroke-width="1.500"/></svg>
      <div class="lang"><span>ENG</span><span>IN</span></div>
      <div class="status">
        <svg class="i20" viewBox="0 0 20 20" stroke-width="1.700"><path d="M1 8a13 13 0 0 1 18 0" stroke="#777"/><path d="M3.500 11a9 9 0 0 1 13 0M6.500 14a5 5 0 0 1 7 0"/><circle cx="10" cy="16.500" r="1"/></svg>
        <svg class="i20" viewBox="0 0 20 20" stroke-width="1.500"><path d="M1 7h3l4-4v14l-4-4H1zM11 7q2 3 0 6M13.500 5q4 5 0 10M16 3q6 7 0 14"/></svg>
        <svg class="i20" viewBox="0 0 20 20"><path d="M6 5h11v11H3V9" stroke-width="1.500"/><path d="M9 7h6v7H5z" fill="#fff"/><path d="M18 9v4" stroke-width="3"/><path d="M4 0L1 6h3v4l4-6H5z" fill="#fff"/></svg>
      </div>
      <div class="clock"><span>23:49</span><span>15-10-2022</span></div>
      <svg class="i20" viewBox="0 0 20 20" stroke-width="1.500"><path d="M9 2a6 6 0 0 0-6 6v5l-2 3h16l-2-3v-2M7 16a2.500 2.500 0 0 0 5 0M8 6h4l-4 5h4M14 1h4l-4 5h4"/></svg>
    </div>
  </footer>
</div>
</body>
</html>
```
FILE: styles.css
```css
* { box-sizing: border-box; }
body { margin: 0; font: 17px/24px "Noto Sans", "Open Sans", sans-serif; color: #161616; background: #fff; }
h2, h3, ul { margin: 0; padding: 0; font-weight: 400; }
ul { list-style: none; }
i { display: block; }
a { text-decoration: none; }
svg { fill: none; stroke: currentColor; flex: none; display: block; }
svg path[fill]:not([stroke]), svg circle[fill]:not([stroke]), svg rect[fill]:not([stroke]) { stroke: none; }
.defs { position: absolute; width: 0; height: 0; }
.plain { border: 0; background: none; padding: 0; margin: 0; font: inherit; color: inherit; display: flex; align-items: center; justify-content: center; white-space: nowrap; }
.i12 { width: 12px; height: 12px; } .i14 { width: 14px; height: 14px; } .i16 { width: 16px; height: 16px; }
.i18 { width: 18px; height: 18px; } .i20 { width: 20px; height: 20px; } .i22 { width: 22px; height: 22px; }
.i24 { width: 24px; height: 24px; } .i30 { width: 30px; height: 30px; }
.strong { stroke-width: 1.5; }
.screen { min-height: 100vh; display: flex; flex-direction: column; }

/* browser chrome */
.browser { background: #323443; color: #fff; font-size: 14px; line-height: 20px; }
.tabstrip { display: flex; height: 38px; background: #0b0b14; }
.btab { display: flex; align-items: center; gap: 10px; width: 304px; padding: 0 15px; color: #b4b5bc; }
.btab.active { width: 300px; padding: 0 10px; background: #323443; border-radius: 8px 8px 0 0; color: #fff; font-weight: 500; }
.close { margin-left: auto; }
.newtab { width: 54px; }
.wincontrols { display: flex; margin-left: auto; }
.wincontrols .plain { width: 57px; }
.navbar { display: flex; align-items: center; height: 45px; padding-left: 19px; }
.navbar > .plain { width: 18px; }
.navbar .forward { margin-left: 22px; color: #6e707d; }
.navbar .reload { margin-left: 22px; }
.navbar .mark { margin: 0 18px 0 157px; }
.url { flex: 1; min-width: 0; display: flex; align-items: center; height: 35px; padding: 0 11px 0 14px; border-radius: 5px; background: #191b22; font-size: 16px; color: #85868d; }
.address { flex: 1; min-width: 0; margin-left: 12px; overflow: hidden; text-overflow: ellipsis; white-space: nowrap; }
.address b { font-weight: 400; color: #fff; }
.rule { width: 1px; height: 19px; margin: 0 14px 0 12px; background: #85868d; }
.lionicon { width: 20px; height: 22px; }
.shield { position: relative; width: 30px; justify-content: flex-start; margin-right: 11px; }
.count { position: absolute; left: 16px; top: -3px; width: 14px; border-radius: 7px; background: #5d5f6b; color: #fff; font-size: 10px; line-height: 15px; }
.exts { display: flex; justify-content: space-between; width: 311px; padding: 0 19px 0 148px; color: #e8e8ee; }
.bookmarks { display: flex; align-items: center; gap: 22px; height: 41px; padding: 0 18px 6px; overflow: hidden; }
.bookmarks a { display: flex; align-items: center; gap: 9px; color: #fff; white-space: nowrap; }
.bookmarks .wide { gap: 13px; }

/* application header */
.appbar { display: flex; height: 60px; background: #161616; color: #fff; border-bottom: 1px solid #393939; align-items: center; }
.menu { width: 56px; }
.brand { width: 350px; padding-left: 22px; white-space: nowrap; border-right: 1px solid #393939; line-height: 30px; }
.brand b { font-weight: 600; }
.switcher { margin-left: 38px; gap: 16px; }
.purple { color: #be95ff; }
.chev { stroke-width: 2; }
.switcher .chev { margin-left: 6px; }
.trial { width: 28px; height: 28px; margin: 0 18px 0 auto; border-radius: 50%; background: #fff; color: #2a4b9b; line-height: 28px; text-align: center; }
.sitesearch { display: flex; align-items: center; width: 435px; height: 59px; padding-left: 20px; gap: 20px; background: #393939; color: #c6c6c6; }
input[type="text"] { flex: 1; min-width: 0; border: 0; padding: 0; background: none; font: inherit; color: inherit; outline: 0; }
::placeholder { color: #757575; opacity: 1; }
.account { display: flex; align-items: center; }
.account .plain { width: 60px; }
.account .bell { position: relative; }
.bell span { position: absolute; left: 28px; top: -8px; width: 20px; height: 20px; border-radius: 50%; background: #da1e28; font-size: 14px; line-height: 20px; }
.account .avatar { width: 40px; height: 40px; margin: 0 10px; border-radius: 50%; background: #0f62fe; }

/* toolbar */
.toolbar { display: flex; height: 51px; border-bottom: 1px solid #e0e0e0; color: #262626; }
.grp { display: flex; align-items: center; justify-content: center; border-right: 1px solid #e0e0e0; }
.rail-w { width: 61px; }
.edit { width: 125px; gap: 16px; padding-left: 2px; }
.save { width: 69px; gap: 18px; padding-left: 2px; }
.share { width: 51px; }
.undo { width: 102px; gap: 31px; }
.off { color: #8d8d8d; }
.switch { appearance: none; margin: 0; flex: none; position: relative; border-radius: 15px; }
.switch::before, .switch::after { content: ""; position: absolute; }
.green { width: 40px; height: 20px; background: #24a148; }
.green::before { right: 3px; top: 3px; width: 14px; height: 14px; border-radius: 50%; background: #fff; }
.green::after { right: 7px; top: 6px; width: 6px; height: 4px; border: solid #24a148; border-width: 0 0 2px 2px; transform: rotate(-45deg); }
.blue { width: 57px; height: 30px; background: #0f62fe; }
.blue::before { right: 4px; top: 2px; width: 26px; height: 26px; border-radius: 50%; background: #fff; }
.blue::after { left: 11px; top: 10px; width: 14px; height: 8px; border: solid #fff; border-width: 0 0 2px 2px; transform: rotate(-45deg); }
.tools { display: flex; align-items: center; gap: 30px; padding-left: 13px; }
.maptype { gap: 10px; }
.panels { display: flex; margin-left: auto; color: #0f62fe; }
.panels .plain { gap: 12px; padding: 0 17px; }
.panels .on { padding: 0 16px; background: #e0e0e0; }

/* work area */
.work { flex: 1; display: flex; min-height: 0; }
.rail { width: 61px; border-right: 1px solid #e0e0e0; }
.rail .plain { width: 60px; height: 58px; }
.rail svg { stroke-width: 1.5; }
.rail .on { height: 60px; margin-bottom: 2px; background: #e0e0e0; border-left: 5px solid #0f62fe; border-radius: 3px 0 0 3px; }
.sources { width: 420px; padding: 24px 20px; }
.crumb { display: flex; gap: 16px; color: #525252; }
.crumb a { color: #0f62fe; }
.srchead { display: flex; align-items: center; margin-top: 20px; }
.srchead h2 { flex: 1; font-size: 17px; font-weight: 600; }
.srchead .plain { width: 40px; }
.srcsearch { display: flex; align-items: center; gap: 10px; height: 40px; margin-top: 19px; padding-left: 10px; background: #f4f4f4; border-bottom: 1px solid #8d8d8d; color: #6f6f6f; }
.tree { margin-top: 14px; color: #525252; }
.tree li { display: flex; align-items: center; height: 40px; padding-left: 30px; }
.tree .nav { padding-left: 54px; }
.tree svg { color: #393939; }
.tree span { margin-left: 11px; }
.tree .plain { margin: 0 24px 0 auto; }
.tri { width: 7px; height: 10px; margin-right: 17px; background: #161616; clip-path: polygon(0 0, 100% 50%, 0 100%); }
.splitter { width: 10px; background: #e0e0e0; display: flex; align-items: center; justify-content: center; }
.splitter i { width: 5px; height: 20px; border: solid #393939; border-width: 0 1px; }
.stage { flex: 1; min-width: 0; display: flex; flex-direction: column; }
.upper { flex: 1; display: flex; min-height: 0; }
.canvas { flex: 1; min-width: 0; display: flex; flex-direction: column; background: #f4f4f4; }
.tabs { display: flex; gap: 4px; height: 52px; padding-left: 3px; border-bottom: 1px solid #c6c6c6; font-weight: 600; }
.tabs .plain { width: 87px; height: 48px; border: solid transparent; border-width: 0 0 4px; padding-top: 8px; }
.tabs .on { border-color: #161616; }
.tabs .add { width: 46px; padding-top: 4px; }
.widget { position: relative; margin: 15px 15px 0; padding: 11px 10px 11px 11px; height: 561px; background: #fff; border: 2px solid #161616; }
.h { position: absolute; width: 10px; height: 10px; background: #161616; }
.tl { left: -6px; top: -6px; } .ml { left: -6px; top: calc(50% - 5px); } .bl { left: -6px; bottom: -6px; }
.bc { left: calc(50% - 5px); bottom: -6px; } .br { right: -6px; bottom: -6px; } .mr { right: -6px; top: calc(50% - 5px); }
.grab { position: absolute; top: -16px; display: flex; align-items: center; justify-content: center; width: 30px; height: 30px; padding: 0; background: #fff; border: 2px solid #161616; color: #161616; }
.move { left: calc(50% - 15px); }
.full { right: -16px; }
.whead { display: flex; align-items: center; justify-content: space-between; padding: 0 11px 0 10px; }
h3 { font-size: 19px; }
.legends { display: flex; margin: 14px 0 0 15px; font-size: 14px; line-height: 20px; height: 76px; }
.sizes { width: 166px; }
.ramp { width: 136px; height: 23px; margin-top: 5px; }
.ends { display: flex; justify-content: space-between; width: 136px; font-size: 11px; color: #6f6f6f; }
.names ul { display: flex; margin-top: 1px; font-size: 13px; color: #6f6f6f; }
.names li { display: flex; align-items: center; width: 119px; gap: 4px; white-space: nowrap; }
.names i { width: 15px; height: 15px; border-radius: 50%; }
i.africa { background: #007d79; } i.europe { background: #fff1f1; } i.asia { background: #ff7eb6; }
i.antarctica { background: #8a3ffc; } i.namerica { background: #6fdc8c; }
.map { position: relative; height: 422px; overflow: hidden; }
.map > svg { width: 100%; height: 422px; }
.land { fill: #e9e9e9; stroke: #bebebe; stroke-width: 4; stroke-linejoin: round; }
.sea { fill: #fff; }
.points circle { stroke-width: 4; }
circle.europe { fill: #fff1f1; stroke: #fa6b6b; } circle.asia { fill: #ff7eb6; stroke: #ee1d85; }
circle.namerica { fill: #6fdc8c; stroke: #38c25f; } circle.africa { fill: #007d79; stroke: #005d5d; }
.zoom { position: absolute; right: 13px; top: 13px; width: 42px; background: #f4f4f4; border: 1px solid #e0e0e0; }
.zoom .plain { width: 40px; height: 40px; }
.zoom svg { stroke-width: 1.5; }
.info { position: absolute; right: 19px; bottom: 19px; }
.hscroll { display: flex; align-items: center; margin-top: auto; height: 21px; padding: 0 8px; background: #f1f1f1; }
.hscroll span { flex: 1; height: 17px; margin: 0 20px 0 7px; background: #c1c1c1; }
.hscroll i { width: 6px; height: 8px; background: #505050; }
.hscroll .left { clip-path: polygon(100% 0, 100% 100%, 0 50%); background: #a3a3a3; }
.hscroll .right { clip-path: polygon(0 0, 100% 50%, 0 100%); }
.drawer { height: 9px; background: #e0e0e0; display: flex; align-items: center; justify-content: center; }
.drawer i { width: 18px; height: 5px; border: solid #525252; border-width: 2px 0; }

/* properties panel */
.props { width: 400px; border-left: 1px solid #e0e0e0; }
.props h2 { padding: 19px 10px 0; font-size: 17px; font-weight: 600; }
.ptabs { display: flex; height: 65px; border-bottom: 1px solid #c6c6c6; padding: 24px 0 0 13px; color: #6f6f6f; }
.ptabs .plain { padding: 2px 17px 0; height: 41px; border-bottom: 4px solid transparent; }
.ptabs .on { padding: 0; width: 107px; color: #525252; border-color: #0f62fe; }
.props .sec { position: relative; width: 100%; justify-content: flex-start; gap: 11px; height: 67px; padding: 0 0 5px 11px; font-weight: 600; }
.sec svg { stroke-width: 2; }
.props > .sec::before { content: ""; position: absolute; left: 30px; right: 30px; top: 0; border-top: 1px solid #f0f0f0; }
.axis { height: 145px; padding-top: 6px; }
.scale { display: flex; align-items: center; justify-content: space-between; height: 60px; margin-top: 12px; padding: 0 12px 0 13px; color: #525252; }

/* taskbar */
.taskbar { display: grid; grid-template-columns: 1fr auto 1fr; align-items: center; height: 60px; border-top: 1px solid #45464a; color: #fff; font-size: 14px; line-height: 20px; background: linear-gradient(90deg, #212121 25%, #1c212b 42%, #18203a 53%, #18203a 60%, #192530 72%, #1f2121 85%); }
.taskbar span { display: block; }
.weather { display: flex; gap: 9px; align-items: center; padding-left: 25px; }
.cloud { width: 30px; height: 20px; }
.dim { color: #c8c8c8; }
.apps { display: flex; gap: 5px; }
.apps .plain { position: relative; width: 50px; height: 50px; }
.apps .current { background: #2a3044; border: 1px solid #343b50; border-radius: 5px; }
.apps .current::after, .apps .running::after { content: ""; position: absolute; bottom: 0; height: 4px; border-radius: 2px; }
.apps .current::after { width: 20px; background: #3ddc6f; }
.apps .running::after { width: 8px; background: #9a9da5; }
.tray { display: flex; align-items: center; justify-content: flex-end; gap: 18px; padding-right: 24px; }
.lang { text-align: center; margin: 0 4px; }
.status { display: flex; gap: 10px; }
.clock { text-align: right; margin: 0 -8px 0 4px; }
```
